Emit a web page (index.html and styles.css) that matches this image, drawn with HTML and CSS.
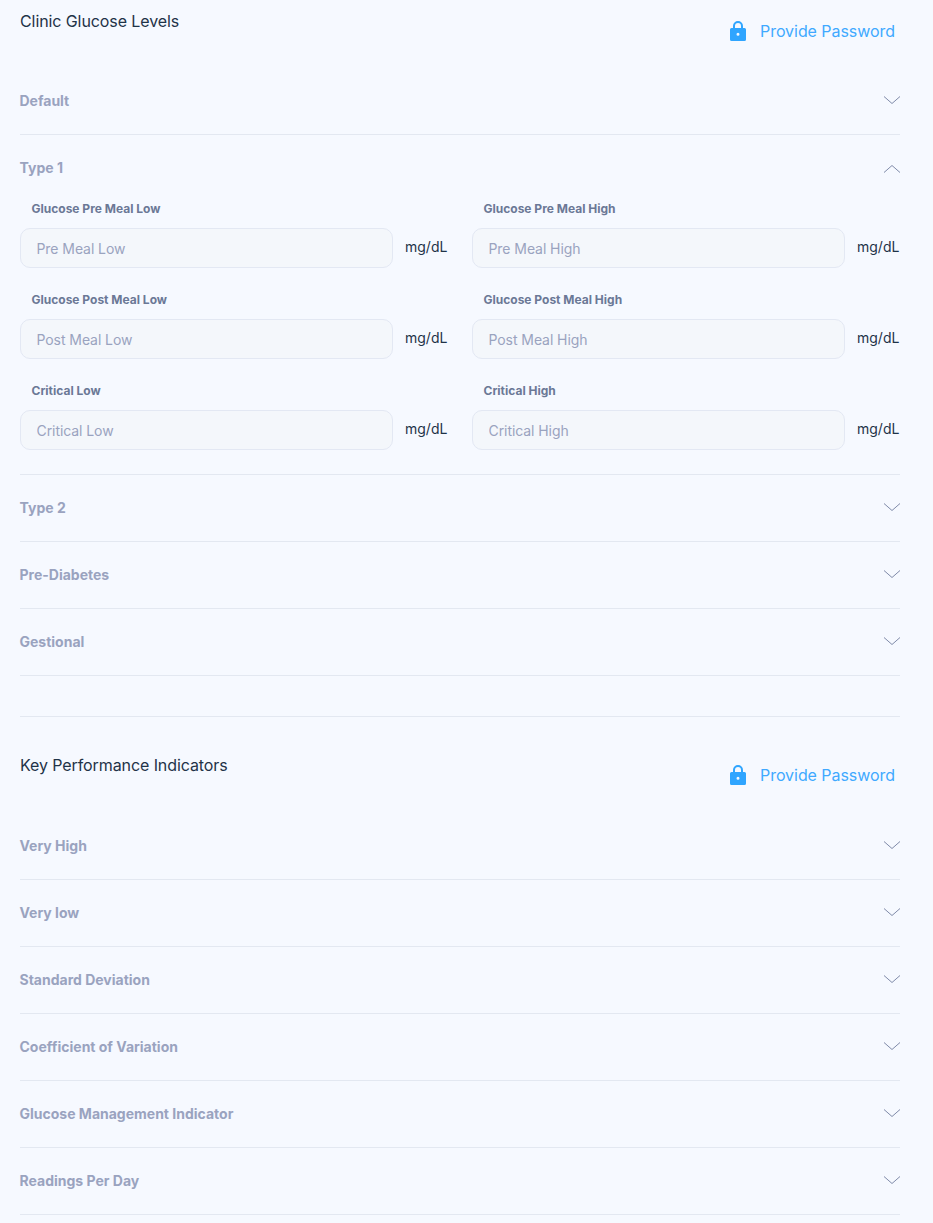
FILE: index.html
```html
<!DOCTYPE html>
<html lang="en">
<head>
<meta charset="utf-8">
<title>Glucose Levels</title>
<link rel="stylesheet" href="styles.css">
</head>
<body>
<section class="section">
  <header class="head">
    <h2 class="title">Clinic Glucose Levels</h2>
    <a class="pw"><svg class="lock" viewBox="0 0 16 20"><path fill="#2fa5ff" fill-rule="evenodd" d="M3 7V5a5 5 0 0 1 10 0v2h1.500A1.500 1.500 0 0 1 16 8.500v10a1.500 1.500 0 0 1-1.500 1.500h-13A1.500 1.500 0 0 1 0 18.500v-10A1.500 1.500 0 0 1 1.500 7zm2 0h6V5a3 3 0 0 0-6 0zM8 11.800a1.500 1.500 0 1 0 0 3 1.500 1.500 0 0 0 0-3z"/></svg><span>Provide Password</span></a>
  </header>
  <div class="row"><div class="row-head"><span class="row-title">Default</span><svg class="chev" viewBox="0 0 16 8"><path d="M0 .5 8 7.500 16 .5"/></svg></div></div>
  <div class="row open">
    <div class="row-head"><span class="row-title">Type 1</span><svg class="chev chev-up" viewBox="0 0 16 8"><path d="M0 7.500 8 .5 16 7.500"/></svg></div>
    <div class="grid">
      <div class="field"><label class="label">Glucose Pre Meal Low</label><div class="input-row"><input class="input" placeholder="Pre Meal Low"><span class="unit">mg/dL</span></div></div>
      <div class="field"><label class="label">Glucose Pre Meal High</label><div class="input-row"><input class="input" placeholder="Pre Meal High"><span class="unit">mg/dL</span></div></div>
      <div class="field"><label class="label">Glucose Post Meal Low</label><div class="input-row"><input class="input" placeholder="Post Meal Low"><span class="unit">mg/dL</span></div></div>
      <div class="field"><label class="label">Glucose Post Meal High</label><div class="input-row"><input class="input" placeholder="Post Meal High"><span class="unit">mg/dL</span></div></div>
      <div class="field"><label class="label">Critical Low</label><div class="input-row"><input class="input" placeholder="Critical Low"><span class="unit">mg/dL</span></div></div>
      <div class="field"><label class="label">Critical High</label><div class="input-row"><input class="input" placeholder="Critical High"><span class="unit">mg/dL</span></div></div>
    </div>
  </div>
  <div class="row"><div class="row-head"><span class="row-title">Type 2</span><svg class="chev" viewBox="0 0 16 8"><path d="M0 .5 8 7.500 16 .5"/></svg></div></div>
  <div class="row"><div class="row-head"><span class="row-title">Pre-Diabetes</span><svg class="chev" viewBox="0 0 16 8"><path d="M0 .5 8 7.500 16 .5"/></svg></div></div>
  <div class="row"><div class="row-head"><span class="row-title">Gestional</span><svg class="chev" viewBox="0 0 16 8"><path d="M0 .5 8 7.500 16 .5"/></svg></div></div>
</section>
<hr class="divider">
<section class="section">
  <header class="head head-second">
    <h2 class="title">Key Performance Indicators</h2>
    <a class="pw"><svg class="lock" viewBox="0 0 16 20"><path fill="#2fa5ff" fill-rule="evenodd" d="M3 7V5a5 5 0 0 1 10 0v2h1.500A1.500 1.500 0 0 1 16 8.500v10a1.500 1.500 0 0 1-1.500 1.500h-13A1.500 1.500 0 0 1 0 18.500v-10A1.500 1.500 0 0 1 1.500 7zm2 0h6V5a3 3 0 0 0-6 0zM8 11.800a1.500 1.500 0 1 0 0 3 1.500 1.500 0 0 0 0-3z"/></svg><span>Provide Password</span></a>
  </header>
  <div class="row"><div class="row-head"><span class="row-title">Very High</span><svg class="chev" viewBox="0 0 16 8"><path d="M0 .5 8 7.500 16 .5"/></svg></div></div>
  <div class="row"><div class="row-head"><span class="row-title">Very low</span><svg class="chev" viewBox="0 0 16 8"><path d="M0 .5 8 7.500 16 .5"/></svg></div></div>
  <div class="row"><div class="row-head"><span class="row-title">Standard Deviation</span><svg class="chev" viewBox="0 0 16 8"><path d="M0 .5 8 7.500 16 .5"/></svg></div></div>
  <div class="row"><div class="row-head"><span class="row-title">Coefficient of Variation</span><svg class="chev" viewBox="0 0 16 8"><path d="M0 .5 8 7.500 16 .5"/></svg></div></div>
  <div class="row"><div class="row-head"><span class="row-title">Glucose Management Indicator</span><svg class="chev" viewBox="0 0 16 8"><path d="M0 .5 8 7.500 16 .5"/></svg></div></div>
  <div class="row"><div class="row-head"><span class="row-title">Readings Per Day</span><svg class="chev" viewBox="0 0 16 8"><path d="M0 .5 8 7.500 16 .5"/></svg></div></div>
</section>
</body>
</html>
```

FILE: styles.css
```css
* { box-sizing: border-box; }
html, body { margin: 0; padding: 0; }
body {
  background: #f6f9ff;
  font-family: Inter, "Liberation Sans", sans-serif;
  width: 933px;
  height: 1223px;
  overflow: hidden;
  padding: 0 33px 0 20px;
}
.head { display: flex; justify-content: space-between; height: 68px; }
.head-second { height: 69px; }
.title { margin: 12px 0 0; font-size: 16px; line-height: 19px; font-weight: 400; color: #1f3348; letter-spacing: -0.09px; }
.pw { display: flex; align-items: flex-start; gap: 14px; padding: 21px 5px 0 0; color: #3fa9ff; font-size: 16px; line-height: 20px; letter-spacing: -0.05px; }
.lock { width: 16px; height: 20px; display: block; }
.row { border-bottom: 1px solid #e3e8f1; }
.row-head { display: flex; justify-content: space-between; align-items: center; height: 66px; }
.row-title { font-size: 14px; font-weight: 700; color: #9aa3bf; margin: -2px 0 0 -0.5px; }
.chev { width: 16px; height: 8px; display: block; margin-top: -2px; }
.chev-up { margin-top: 2px; }
.chev path { fill: none; stroke: #7f8aa8; stroke-width: 1; }
.grid { display: grid; grid-template-columns: 428px 428px; column-gap: 24px; row-gap: 24px; padding-bottom: 24px; }
.label { display: block; padding-left: 11.5px; font-size: 12px; line-height: 15px; font-weight: 700; color: #6b7896; margin-bottom: 12px; }
.input-row { display: flex; align-items: center; gap: 12px; }
.input {
  width: 373px; height: 40px; padding: 1px 15.5px 0;
  background: #f4f7fb; border: 1px solid #e3e8f3; border-radius: 10px;
  font-family: inherit; font-size: 14px; letter-spacing: -0.07px; color: #333; outline: none;
}
.input::placeholder { color: #9aa3bf; opacity: 1; }
.unit { font-size: 14px; line-height: 17px; color: #1f3348; margin-top: -3px; white-space: nowrap; }
.divider { border: 0; border-top: 1px solid #e3e8f1; margin: 40px 0 27px; }
```
